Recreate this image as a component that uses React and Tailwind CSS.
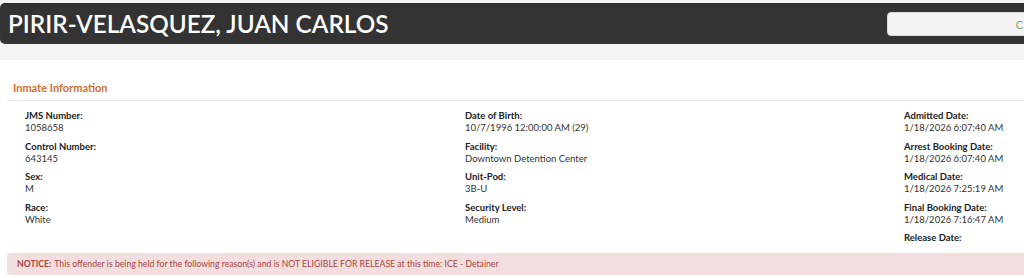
import React from 'react';

const columns = [
  [
    ['JMS Number:', '1058658'],
    ['Control Number:', '643145'],
    ['Sex:', 'M'],
    ['Race:', 'White'],
  ],
  [
    ['Date of Birth:', '10/7/1996 12:00:00 AM (29)'],
    ['Facility:', 'Downtown Detention Center'],
    ['Unit-Pod:', '3B-U'],
    ['Security Level:', 'Medium'],
  ],
  [
    ['Admitted Date:', '1/18/2026 6:07:40 AM'],
    ['Arrest Booking Date:', '1/18/2026 6:07:40 AM'],
    ['Medical Date:', '1/18/2026 7:25:19 AM'],
    ['Final Booking Date:', '1/18/2026 7:16:47 AM'],
    ['Release Date:', ''],
  ],
];

const Field = ({ label, value }) => (
  <div className="mb-[6.5px]">
    <div className="font-bold text-[9.5px] leading-[12px] text-[#222]">{label}</div>
    {value && <div className="text-[9.5px] leading-[12px] text-[#333]">{value}</div>}
  </div>
);

export default function App() {
  return (
    <div
      className="w-[1024px] h-[278px] overflow-hidden bg-white"
      style={{ fontFamily: 'Lato, "Open Sans", sans-serif' }}
    >
      {/* Top band with name header */}
      <div className="bg-[#f4f4f4] pt-[3px] pb-[16px]">
        <div className="flex items-center h-[41px] bg-[#333333] rounded-l-[5px] pl-[8px] border-t border-[#2a2a2a]">
          <h1 className="text-white font-semibold text-[24.3px] leading-none whitespace-nowrap">
            PIRIR-VELASQUEZ, JUAN CARLOS
          </h1>
          <div className="ml-auto shrink-0 mr-[-60px] w-[197px] h-[24px] rounded-[4px] bg-[#f3f3f3] border border-[#d8d8d8] flex items-center justify-end pr-[60px]">
            <span className="text-[#7aa865] text-[11px] leading-none">C</span>
          </div>
        </div>
      </div>

      {/* Inmate information */}
      <div className="pl-[7px] pt-[21px]">
        <div className="pl-[6px] pb-[5px] border-b border-[#e6e6e6]">
          <h2 className="text-[#d2702e] font-bold text-[11px] leading-[14px]">Inmate Information</h2>
        </div>

        <div className="grid grid-cols-[440px_439px_1fr] pl-[18px] pt-[9px]">
          {columns.map((col, i) => (
            <div key={i}>
              {col.map(([label, value]) => (
                <Field key={label} label={label} value={value} />
              ))}
            </div>
          ))}
        </div>

        <div className="mt-[2.5px] h-[22px] bg-[#f2dede] rounded-l-[3px] flex items-center pl-[10px] text-[#a94442] text-[8.7px] whitespace-nowrap">
          <span className="font-bold mr-[3px]">NOTICE:</span>
          This offender is being held for the following reason(s) and is NOT ELIGIBLE FOR RELEASE at this time: ICE - Detainer
        </div>
      </div>
    </div>
  );
}
